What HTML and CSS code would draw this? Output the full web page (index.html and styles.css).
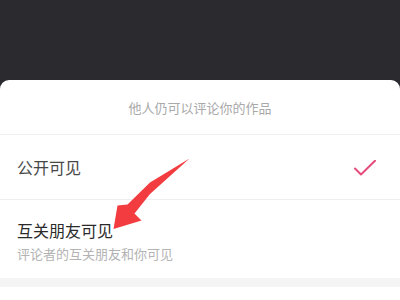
FILE: index.html
```html
<!DOCTYPE html>
<html lang="zh-CN">
<head>
<meta charset="utf-8">
<link rel="stylesheet" href="styles.css">
</head>
<body>
<div class="page">
  <div class="backdrop"></div>
  <div class="sheet">
    <div class="sheet-header">他人仍可以评论你的作品</div>
    <div class="option option-single">
      <span class="option-title">公开可见</span>
      <svg class="check" width="22" height="16" viewBox="0 0 22 16">
        <path d="M1 8.5 L7 14.5 L21 0.8" fill="none" stroke="#e64c7c" stroke-width="2" stroke-linecap="round" stroke-linejoin="round"/>
      </svg>
    </div>
    <div class="option option-double">
      <span class="option-title strong">互关朋友可见</span>
      <span class="option-sub">评论者的互关朋友和你可见</span>
    </div>
    <div class="band"></div>
  </div>
  <svg class="annotation" width="400" height="300" viewBox="0 0 400 300">
    <path d="M189.5 158.5 L150 182.5 L127.5 204.5 L117.5 205.5 L113.5 229 L141.5 220.5 L134.5 213.5 L150 194 Z" fill="#f23c3f"/>
  </svg>
</div>
</body>
</html>
```

FILE: styles.css
```css
html, body {
  margin: 0;
  padding: 0;
}
body {
  width: 400px;
  height: 300px;
  overflow: hidden;
  background: #2b2b2f;
  font-family: "Noto Sans CJK SC", "Noto Sans", sans-serif;
}
.page {
  position: relative;
  width: 400px;
  height: 300px;
  display: flex;
  flex-direction: column;
}
.backdrop {
  height: 80px;
  flex: none;
  background: #2b2b2f;
}
.sheet {
  flex: 1;
  background: #ffffff;
  border-radius: 9px 9px 0 0;
  display: flex;
  flex-direction: column;
}
.sheet-header {
  height: 54px;
  display: flex;
  align-items: center;
  justify-content: center;
  font-size: 13px;
  color: #a9a9a9;
  border-bottom: 1px solid #efefef;
}
.option {
  padding: 0 24px 0 17px;
  border-bottom: 1px solid #efefef;
}
.option-single {
  height: 64px;
  display: flex;
  align-items: center;
  justify-content: space-between;
}
.option-double {
  display: flex;
  flex-direction: column;
  gap: 4px;
  padding-top: 19px;
  padding-bottom: 15px;
  border-bottom: none;
}
.option-title {
  font-size: 16px;
  line-height: 22px;
  color: #474747;
}
.option-title.strong {
  color: #2a2a2a;
}
.option-sub {
  font-size: 13px;
  line-height: 18px;
  color: #b3b3b3;
}
.check {
  display: block;
  margin-top: 1px;
}
.band {
  height: 9px;
  background: #f4f4f4;
}
.annotation {
  position: absolute;
  left: 0;
  top: 0;
  pointer-events: none;
}
```
